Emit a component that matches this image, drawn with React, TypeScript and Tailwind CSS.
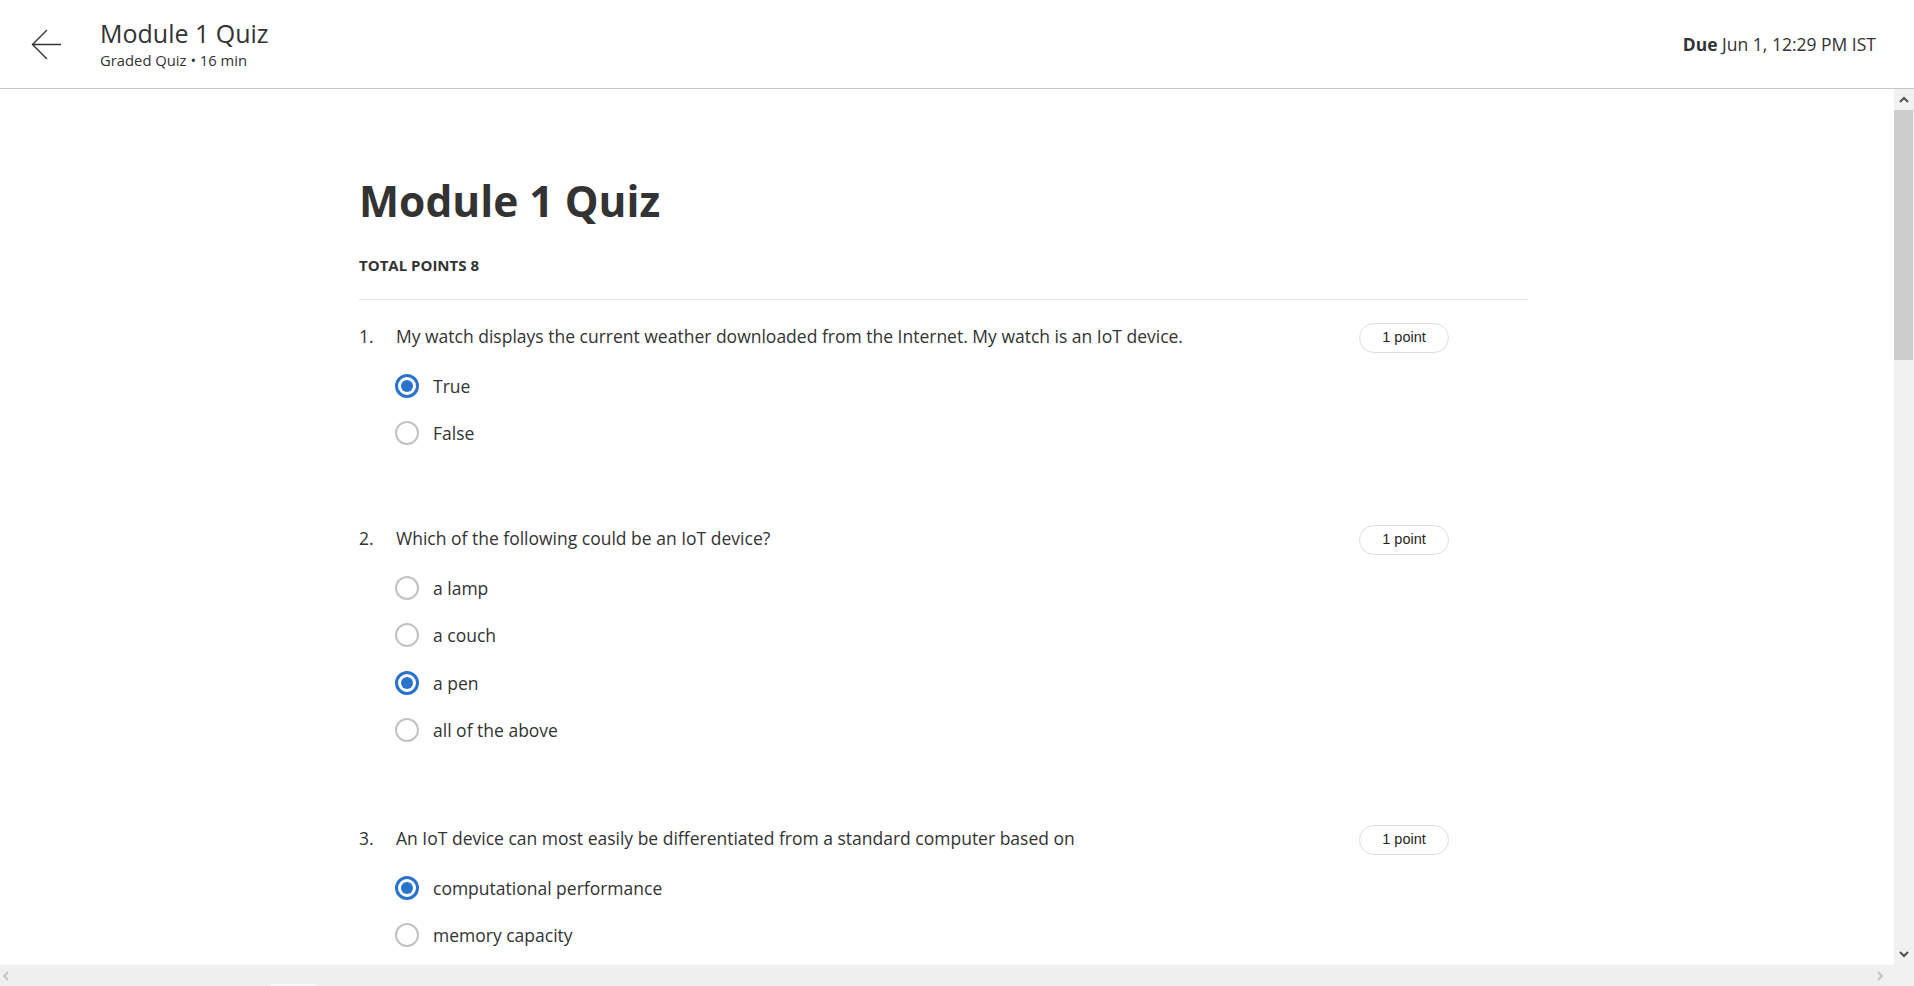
import React from 'react';

type Question = {
  id: number;
  text: string;
  options: string[];
  selected: number;
};

const questions: Question[] = [
  {
    id: 1,
    text: 'My watch displays the current weather downloaded from the Internet. My watch is an IoT device.',
    options: ['True', 'False'],
    selected: 0,
  },
  {
    id: 2,
    text: 'Which of the following could be an IoT device?',
    options: ['a lamp', 'a couch', 'a pen', 'all of the above'],
    selected: 2,
  },
  {
    id: 3,
    text: 'An IoT device can most easily be differentiated from a standard computer based on',
    options: ['computational performance', 'memory capacity'],
    selected: 0,
  },
];

// spacing above each question block
const topGaps = ['mt-[23px]', 'mt-[68px]', 'mt-[71px]'];

const Radio: React.FC<{ checked: boolean }> = ({ checked }) =>
  checked ? (
    <span className="w-6 h-6 rounded-full border-[3px] border-[#2a73cc] flex items-center justify-center shrink-0">
      <span className="w-3 h-3 rounded-full bg-[#2a73cc]" />
    </span>
  ) : (
    <span className="w-6 h-6 rounded-full border-[2.5px] border-[#c2c2c2] shrink-0" />
  );

const QuestionBlock: React.FC<{ q: Question; gap: string }> = ({ q, gap }) => (
  <div className={gap}>
    <div className="flex items-start pr-[79px]">
      <span className="w-[37px] text-[17.5px] leading-[27px] text-[#333]">{q.id}.</span>
      <p className="flex-1 text-[17.5px] leading-[27px] text-[#333]">{q.text}</p>
      <span className="h-[30px] w-[90px] rounded-full border border-[#dedede] flex items-center justify-center font-['Liberation_Sans',Arial,sans-serif] text-[14.5px] text-[#1f1f1f]">
        1 point
      </span>
    </div>
    <div className="mt-[9px]">
      {q.options.map((opt, i) => (
        <label key={opt} className="h-[47.5px] pl-[36px] flex items-center">
          <Radio checked={i === q.selected} />
          <span className="ml-[14px] text-[17.5px] text-[#333]">{opt}</span>
        </label>
      ))}
    </div>
  </div>
);

const VScrollbar = () => (
  <div className="w-[20px] bg-[#f1f1f1] flex flex-col shrink-0">
    <div className="h-[21px] flex items-center justify-center">
      <svg width="10" height="7" viewBox="0 0 10 7">
        <path d="M1 6 L5 2 L9 6" fill="none" stroke="#505050" strokeWidth="2" />
      </svg>
    </div>
    <div className="h-[250px] bg-[#cdcdcd] mr-px" />
    <div className="flex-1" />
    <div className="h-[21px] flex items-center justify-center">
      <svg width="10" height="7" viewBox="0 0 10 7">
        <path d="M1 1 L5 5 L9 1" fill="none" stroke="#505050" strokeWidth="2" />
      </svg>
    </div>
    <div className="h-[21px]" />
  </div>
);

const HScrollbar = () => (
  <div className="h-[21px] bg-[#f0f0f0] flex items-center justify-between px-[2px] relative shrink-0">
    <svg width="7" height="10" viewBox="0 0 7 10">
      <path d="M6 1 L2 5 L6 9" fill="none" stroke="#c1c1c1" strokeWidth="1.8" />
    </svg>
    <svg width="7" height="10" viewBox="0 0 7 10" className="mr-[8px]">
      <path d="M1 1 L5 5 L1 9" fill="none" stroke="#c1c1c1" strokeWidth="1.8" />
    </svg>
    <div className="absolute left-[271px] bottom-0 w-[45px] h-[2px] bg-[#f9f9f9]" />
  </div>
);

export default function App() {
  return (
    <div className="h-screen w-full flex flex-col bg-white overflow-hidden font-['Open_Sans',sans-serif] text-[#333]">
      <header className="h-[89px] border-b border-[#c6c6c6] flex items-center justify-between shrink-0">
        <div className="flex items-center">
          <button className="ml-[31px] w-[31px] h-[31px] flex items-center justify-center">
            <svg width="31" height="31" viewBox="0 0 31 31">
              <path d="M30 15.5 H2 M16 1 L1.5 15.5 L16 30" fill="none" stroke="#333" strokeWidth="1.4" />
            </svg>
          </button>
          <div className="ml-[38px] flex flex-col">
            <h1 className="text-[25px] leading-[30px] text-[#333]">Module 1 Quiz</h1>
            <p className="mt-[2px] text-[14.8px] leading-[20px] text-[#333]">Graded Quiz • 16 min</p>
          </div>
        </div>
        <div className="mr-[38px] text-[17.5px] text-[#333]">
          <span className="font-bold">Due</span> Jun 1, 12:29 PM IST
        </div>
      </header>

      <div className="flex flex-1 min-h-0">
        <div className="flex-1 flex flex-col min-w-0">
          <main className="flex-1 overflow-hidden">
            <div className="ml-[359px] w-[1169px] pt-[85px]">
              <h2 className="text-[42.5px] leading-[53px] font-bold text-[#333]">Module 1 Quiz</h2>
              <p className="mt-[28px] text-[15px] leading-[20px] font-bold text-[#333]">TOTAL POINTS 8</p>
              <div className="mt-[24px] h-px bg-[#e1e1e1]" />
              {questions.map((q, i) => (
                <QuestionBlock key={q.id} q={q} gap={topGaps[i]} />
              ))}
            </div>
          </main>
          <HScrollbar />
        </div>
        <VScrollbar />
      </div>
    </div>
  );
}
